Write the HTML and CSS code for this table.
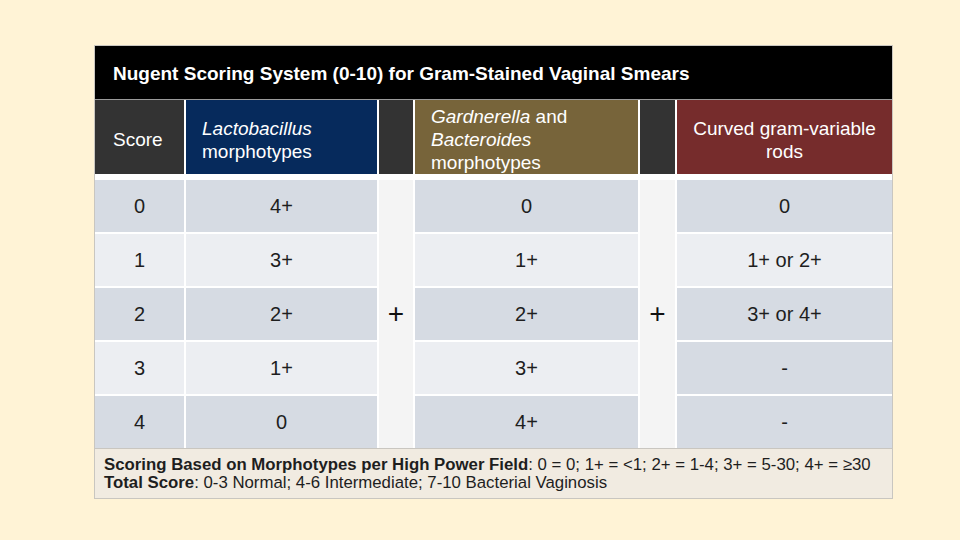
FILE: index.html
```html
<!DOCTYPE html>
<html>
<head>
<meta charset="utf-8">
<link rel="stylesheet" href="styles.css">
</head>
<body>
<div class="card">
  <div class="title">Nugent Scoring System (0-10) for Gram-Stained Vaginal Smears</div>
  <div class="grid head">
    <div class="hc score-h">Score</div>
    <div class="hc lacto"><span><i>Lactobacillus</i><br>morphotypes</span></div>
    <div class="hc dark"></div>
    <div class="hc gard"><span><i>Gardnerella</i> and<br><i>Bacteroides</i><br>morphotypes</span></div>
    <div class="hc dark"></div>
    <div class="hc curved"><span>Curved gram-variable<br>rods</span></div>
  </div>
  <div class="grid body">
    <div class="c d c1">0</div><div class="c d c2">4+</div><div class="plus p1">+</div><div class="c d c4">0</div><div class="plus p2">+</div><div class="c d c6">0</div>
    <div class="c l c1">1</div><div class="c l c2">3+</div><div class="c l c4">1+</div><div class="c l c6">1+ or 2+</div>
    <div class="c d c1">2</div><div class="c d c2">2+</div><div class="c d c4">2+</div><div class="c d c6">3+ or 4+</div>
    <div class="c l c1">3</div><div class="c l c2">1+</div><div class="c l c4">3+</div><div class="c d c6">-</div>
    <div class="c d c1">4</div><div class="c d c2">0</div><div class="c d c4">4+</div><div class="c d c6">-</div>
  </div>
  <div class="foot">
    <div><b>Scoring Based on Morphotypes per High Power Field</b>: 0 = 0; 1+ = &lt;1; 2+ = 1-4; 3+ = 5-30; 4+ = ≥30</div>
    <div><b>Total Score</b>: 0-3 Normal; 4-6 Intermediate; 7-10 Bacterial Vaginosis</div>
  </div>
</div>
</body>
</html>
```
FILE: styles.css
```css
html, body {
  margin: 0;
  padding: 0;
}
body {
  background: #fff3d6;
  width: 960px;
  height: 540px;
  font-family: "Liberation Sans", Arial, sans-serif;
  padding: 45px 0 0 94px;
  box-sizing: border-box;
}
.card {
  width: 797px;
  border: 1px solid #c9c6c0;
  background: #ffffff;
}
.title {
  height: 53px;
  background: #000000;
  color: #ffffff;
  font-weight: bold;
  font-size: 19px;
  display: flex;
  align-items: center;
  padding: 3px 0 0 18px;
  box-sizing: border-box;
}
.grid {
  display: grid;
  grid-template-columns: 89px 191px 34px 223px 35px 215px;
  column-gap: 2px;
}
.head {
  height: 75px;
  border-top: 1px solid #9a9a9a;
  box-sizing: border-box;
}
.hc {
  color: #ffffff;
  font-size: 19px;
  line-height: 23px;
  display: flex;
  align-items: center;
  padding-top: 5px;
  box-sizing: border-box;
}
.score-h {
  background: #333333;
  padding-left: 18px;
}
.lacto {
  background: #062a5c;
  padding-left: 16px;
}
.dark {
  background: #333333;
}
.gard {
  background: #77643a;
  padding-left: 16px;
}
.curved {
  background: #762c2c;
  justify-content: center;
  text-align: center;
}
.body {
  margin-top: 6px;
  grid-template-rows: repeat(5, 52px);
  row-gap: 2px;
}
.c {
  display: flex;
  align-items: center;
  justify-content: center;
  font-size: 20px;
  color: #1e1e1e;
}
.d {
  background: #d6dbe3;
}
.l {
  background: #eceef2;
}
.c1 { grid-column: 1; }
.c2 { grid-column: 2; }
.c4 { grid-column: 4; }
.c6 { grid-column: 6; }
.plus {
  grid-row: 1 / span 5;
  background: #f4f4f4;
  display: flex;
  align-items: center;
  justify-content: center;
  font-size: 28px;
  color: #111111;
}
.p1 { grid-column: 3; }
.p2 { grid-column: 5; }
.foot {
  height: 50px;
  border-top: 1px solid #c9c6c0;
  background: #f1ebe1;
  font-size: 16.8px;
  line-height: 18px;
  color: #1e1e1e;
  padding: 7px 0 0 9px;
  box-sizing: border-box;
}
```
